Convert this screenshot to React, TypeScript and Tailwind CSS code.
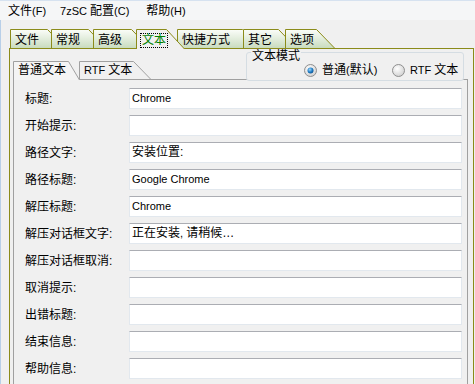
import React from "react";

const OLIVE = "#8b8b1a";

function L({ children }: { children: React.ReactNode }) {
  return <span className="text-[11px]">{children}</span>;
}

function OuterTab({
  label,
  w,
  top,
  selected,
  z,
  className,
}: {
  label: string;
  w: number;
  top: number;
  selected?: boolean;
  z: string;
  className: string;
}) {
  const h = selected ? 20 : 19;
  return (
    <div className={`relative ${className} ${z} ${selected ? "h-[20px] -mb-px" : "h-[19px]"}`}>
      <svg className="absolute inset-0" width={w} height={h}>
        <defs>
          <linearGradient id="tabg" x1="0" y1="0" x2="0" y2="1">
            <stop offset="0" stopColor="#fbfdf9" />
            <stop offset="1" stopColor="#c9dcbf" />
          </linearGradient>
        </defs>
        <path
          d={`M0.5 ${h} V0.5 H${top - 0.5} L${w - 0.5} ${h}`}
          fill={selected ? "#f0f0f0" : "url(#tabg)"}
          stroke={OLIVE}
          strokeWidth="1"
        />
      </svg>
      <div className="relative pl-[4px] pt-[2px] h-full">
        {selected ? (
          <span className="inline-block border border-dotted border-black px-px leading-[13px] text-[#008000]">
            {label}
          </span>
        ) : (
          <span className="inline-block px-px leading-[15px] text-black">{label}</span>
        )}
      </div>
    </div>
  );
}

function InnerTab({
  children,
  w,
  top,
  selected,
  className,
}: {
  children: React.ReactNode;
  w: number;
  top: number;
  selected?: boolean;
  className: string;
}) {
  const h = selected ? 19 : 18;
  return (
    <div className={`relative ${className} ${selected ? "h-[19px] -mb-px" : "h-[18px]"}`}>
      <svg className="absolute inset-0" width={w} height={h}>
        <path
          d={`M0.5 ${h} V0.5 H${top - 0.5} L${w - 0.5} ${h}`}
          fill={selected ? "#f4f4f4" : "#f0f0f0"}
          stroke="#a0a0a0"
          strokeWidth="1"
        />
      </svg>
      <div className="relative pl-[5px] pt-[1px] leading-[16px]">{children}</div>
    </div>
  );
}

function Radio({ checked }: { checked?: boolean }) {
  return (
    <svg width="13" height="13" viewBox="0 0 13 13">
      <defs>
        <radialGradient id="rb" cx="0.4" cy="0.35" r="0.7">
          <stop offset="0" stopColor="#ffffff" />
          <stop offset="1" stopColor="#cfcfcf" />
        </radialGradient>
        <radialGradient id="rd" cx="0.4" cy="0.35" r="0.7">
          <stop offset="0" stopColor="#9fd6fb" />
          <stop offset="0.6" stopColor="#1e7cc4" />
          <stop offset="1" stopColor="#0d4f8b" />
        </radialGradient>
      </defs>
      <circle cx="6.5" cy="6.5" r="6" fill="url(#rb)" stroke="#8f8f8f" />
      {checked && <circle cx="6.5" cy="6.5" r="3" fill="url(#rd)" />}
    </svg>
  );
}

const rows: [string, React.ReactNode][] = [
  ["标题:", <L>Chrome</L>],
  ["开始提示:", ""],
  ["路径文字:", "安装位置:"],
  ["路径标题:", <L>Google Chrome</L>],
  ["解压标题:", <L>Chrome</L>],
  ["解压对话框文字:", <>正在安装<L>, </L>请稍候…</>],
  ["解压对话框取消:", ""],
  ["取消提示:", ""],
  ["出错标题:", ""],
  ["结束信息:", ""],
  ["帮助信息:", ""],
];

export default function App() {
  return (
    <div className="w-[475px] h-[384px] overflow-hidden bg-[#f0f0f0] text-[12px] text-black font-[family-name:Liberation_Sans,Noto_Sans_CJK_SC,sans-serif]">
      {/* menu bar */}
      <div className="h-[20px] flex items-center border-t border-[#d6e2f0] bg-[#f5f6f7]">
        <span className="ml-[8px]">文件<L>(F)</L></span>
        <span className="ml-[14px]"><L>7zSC </L>配置<L>(C)</L></span>
        <span className="ml-[17px]">帮助<L>(H)</L></span>
      </div>
      {/* body */}
      <div className="h-[364px] border-l border-[#b8cfe8] pl-[8px] pt-[9px]">
        {/* outer tabs */}
        <div className="flex items-end pl-px h-[19px]">
          <OuterTab label="文件" w={56} top={38} z="z-[1]" className="w-[56px]" />
          <OuterTab label="常规" w={56} top={38} z="z-[2]" className="w-[56px] -ml-[15px]" />
          <OuterTab label="高级" w={57} top={39} z="z-[3]" className="w-[57px] -ml-[14px]" />
          <OuterTab label="文本" w={49} top={31} selected z="z-[20]" className="w-[49px] -ml-[14px]" />
          <OuterTab label="快捷方式" w={84} top={66} z="z-[5]" className="w-[84px] -ml-[8px]" />
          <OuterTab label="其它" w={54} top={36} z="z-[6]" className="w-[54px] -ml-[18px]" />
          <OuterTab label="选项" w={50} top={32} z="z-[7]" className="w-[50px] -ml-[12px]" />
        </div>
        {/* outer panel */}
        <div className="relative w-[465px] h-[340px] border border-[#8b8b1a] pl-[3px] pt-[12px]">
          {/* group box */}
          <div className="absolute left-[236px] top-[3px] w-[218px] h-[29px] z-10 rounded-[3px] border border-[#d5dde3] bg-[#f0f0f0]">
            <span className="absolute left-[4px] -top-[4px] px-px bg-[#f0f0f0] leading-[14px]">文本模式</span>
            <div className="absolute left-[57px] top-[10px] flex items-center">
              <Radio checked />
              <span className="ml-[5px] leading-[14px]">普通<L>(</L>默认<L>)</L></span>
            </div>
            <div className="absolute left-[145px] top-[10px] flex items-center">
              <Radio />
              <span className="ml-[5px] leading-[14px]"><L>RTF </L>文本</span>
            </div>
          </div>
          {/* inner tabs */}
          <div className="flex items-end h-[18px]">
            <InnerTab w={67} top={56} selected className="w-[67px] z-[5]">普通文本</InnerTab>
            <InnerTab w={72} top={55} className="w-[72px] -ml-px z-[6]"><L>RTF </L>文本</InnerTab>
          </div>
          {/* inner panel */}
          <div className="w-[455px] h-[320px] border border-[#a0a0a0] bg-[#f0f0f0] pl-[11px] pt-[8px] flex flex-col gap-[6px]">
            {rows.map(([label, value]) => (
              <div key={label} className="flex items-center h-[21px]">
                <div className="w-[104px] shrink-0">{label}</div>
                <div className="w-[333px] h-[21px] bg-white border border-[#e2e8ee] border-t-[#abadb3] pl-[2px] leading-[19px]">
                  {value}
                </div>
              </div>
            ))}
          </div>
        </div>
      </div>
    </div>
  );
}
